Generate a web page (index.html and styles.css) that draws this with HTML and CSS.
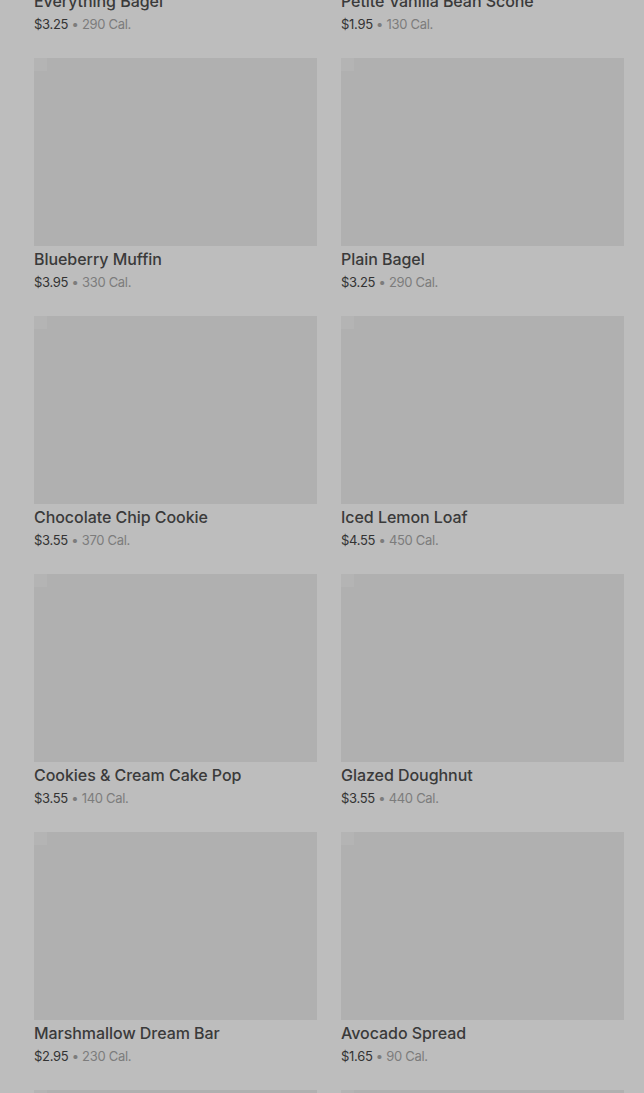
FILE: index.html
```html
<!DOCTYPE html>
<html lang="en">

<head>
  <meta charset="UTF-8">
  <meta name="viewport" content="width=device-width, initial-scale=1.0">
  <title>Bakery Menu</title>
  <link rel="stylesheet" href="styles.css">
</head>

<body>
  <div class="menu-grid">
    <div class="menu-card">
      <div class="menu-image"><span class="broken"></span></div>
      <h4>Everything Bagel</h4>
      <p class="meta"><span class="price">$3.25</span> • 290 Cal.</p>
    </div>
    <div class="menu-card">
      <div class="menu-image"><span class="broken"></span></div>
      <h4>Petite Vanilla Bean Scone</h4>
      <p class="meta"><span class="price">$1.95</span> • 130 Cal.</p>
    </div>
    <div class="menu-card">
      <div class="menu-image"><span class="broken"></span></div>
      <h4>Blueberry Muffin</h4>
      <p class="meta"><span class="price">$3.95</span> • 330 Cal.</p>
    </div>
    <div class="menu-card">
      <div class="menu-image"><span class="broken"></span></div>
      <h4>Plain Bagel</h4>
      <p class="meta"><span class="price">$3.25</span> • 290 Cal.</p>
    </div>
    <div class="menu-card">
      <div class="menu-image"><span class="broken"></span></div>
      <h4>Chocolate Chip Cookie</h4>
      <p class="meta"><span class="price">$3.55</span> • 370 Cal.</p>
    </div>
    <div class="menu-card">
      <div class="menu-image"><span class="broken"></span></div>
      <h4>Iced Lemon Loaf</h4>
      <p class="meta"><span class="price">$4.55</span> • 450 Cal.</p>
    </div>
    <div class="menu-card">
      <div class="menu-image"><span class="broken"></span></div>
      <h4>Cookies &amp; Cream Cake Pop</h4>
      <p class="meta"><span class="price">$3.55</span> • 140 Cal.</p>
    </div>
    <div class="menu-card">
      <div class="menu-image"><span class="broken"></span></div>
      <h4>Glazed Doughnut</h4>
      <p class="meta"><span class="price">$3.55</span> • 440 Cal.</p>
    </div>
    <div class="menu-card">
      <div class="menu-image"><span class="broken"></span></div>
      <h4>Marshmallow Dream Bar</h4>
      <p class="meta"><span class="price">$2.95</span> • 230 Cal.</p>
    </div>
    <div class="menu-card">
      <div class="menu-image"><span class="broken"></span></div>
      <h4>Avocado Spread</h4>
      <p class="meta"><span class="price">$1.65</span> • 90 Cal.</p>
    </div>
    <div class="menu-card">
      <div class="menu-image"><span class="broken"></span></div>
      <h4>Ham &amp; Swiss Croissant</h4>
      <p class="meta"><span class="price">$4.95</span> • 320 Cal.</p>
    </div>
    <div class="menu-card">
      <div class="menu-image"><span class="broken"></span></div>
      <h4>Banana Walnut Bread</h4>
      <p class="meta"><span class="price">$3.75</span> • 410 Cal.</p>
    </div>
  </div>
</body>

</html>
```

FILE: styles.css
```css
body {
  font-family: Inter, Roboto, "Liberation Sans", sans-serif;
  background-color: #bdbdbd;
  margin: 0;
  overflow: hidden;
}

.menu-grid {
  display: grid;
  grid-template-columns: 283px 283px;
  column-gap: 24px;
  padding: 0 20px 0 34px;
  margin-top: -200px;
}

.menu-card {
  height: 258px;
}

.menu-image {
  position: relative;
  height: 188px;
  background-color: #b0b0b0;
}

.broken {
  position: absolute;
  top: 0;
  left: 0;
  width: 13px;
  height: 13px;
  background-color: #b4b4b4;
}

.menu-card h4 {
  margin: 2px 0 0;
  font-size: 16px;
  font-weight: 500;
  line-height: 22px;
  letter-spacing: -0.05px;
  color: #3a3a3a;
}

.meta {
  margin: 2px 0 0;
  font-size: 13px;
  line-height: 20px;
  letter-spacing: -0.3px;
  color: #7c7c7c;
}

.price {
  color: #333;
}
```
